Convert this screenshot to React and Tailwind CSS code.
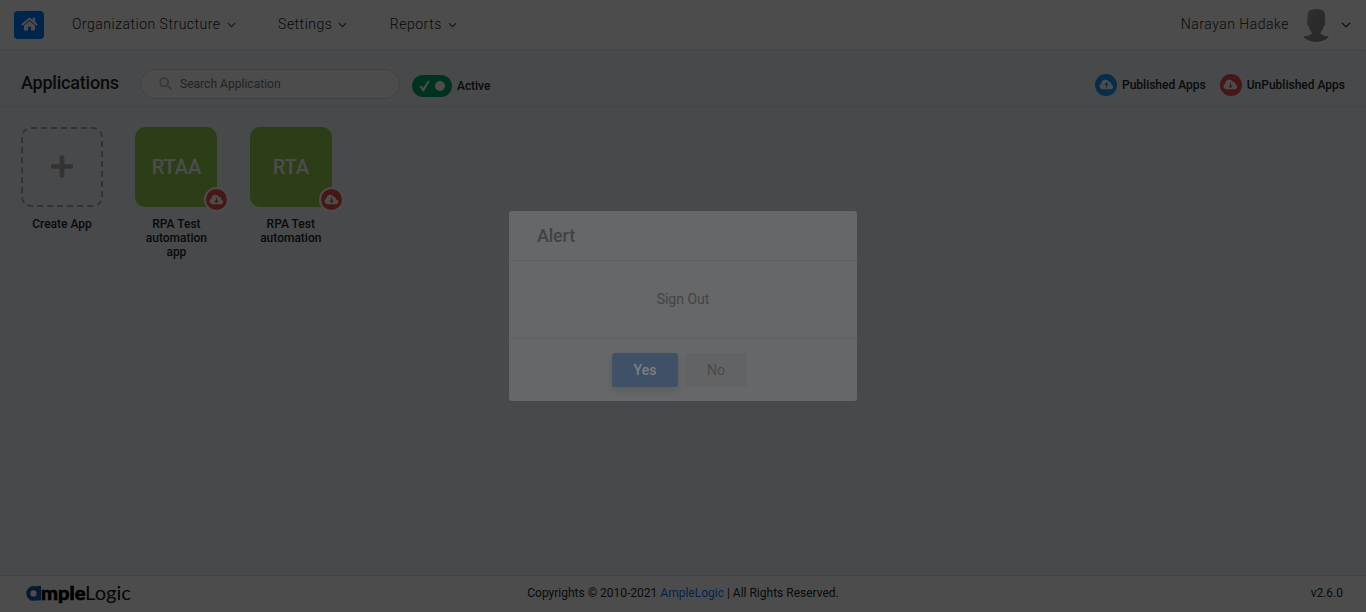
import { FaPlus } from "react-icons/fa";

function Chevron({ className = "" }) {
  return (
    <svg viewBox="0 0 10 6" className={className} fill="none" stroke="currentColor" strokeWidth="1.2">
      <path d="M1 0.8 5 4.8 9 0.8" />
    </svg>
  );
}

function HomeIcon() {
  return (
    <svg viewBox="0 0 17 14" className="-mt-px h-[14px] w-[17px]">
      <path fill="#fff" d="M8.5 4 14 8.6V13.4H10V9.8H7V13.4H3V8.6Z" />
      <path fill="none" stroke="#fff" strokeWidth="2" d="M.8 8 8.5 1.6 16.2 8" />
      <path fill="#fff" d="M11.7 .8H14.1V5.8L11.7 3.8Z" />
    </svg>
  );
}

function SearchIcon() {
  return (
    <svg viewBox="0 0 13 13" className="h-[13px] w-[13px]" fill="none" stroke="#bfc1c4" strokeWidth="2">
      <circle cx="5.2" cy="5.2" r="4" />
      <path d="M8.2 8.2 12.2 12.2" />
    </svg>
  );
}

function CloudArrow({ down = false, className = "" }) {
  return (
    <svg viewBox="0 0 16 11" className={className}>
      <path fill="#fff" d="M3.7 10.5A3.2 3.2 0 0 1 2.6 4.3 4.2 4.2 0 0 1 10.5 2.6 3 3 0 0 1 13.2 5.4 2.6 2.6 0 0 1 12.8 10.5Z" />
      <path
        fill="none"
        stroke={down ? "#e8504c" : "#2196f3"}
        strokeWidth="1.2"
        d={down ? "M8 3.6V8.4M6.2 6.8 8 8.6 9.8 6.8" : "M8 9V4.2M6.2 5.8 8 4 9.8 5.8"}
      />
    </svg>
  );
}

function NavItem({ label, className = "" }) {
  return (
    <div className={`flex items-center gap-[6px] ${className}`}>
      <span className="whitespace-nowrap text-[14px] font-light tracking-[0.5px] text-[#222]">{label}</span>
      <Chevron className="mt-px h-[6px] w-[9px] text-[#444]" />
    </div>
  );
}

function AppTile({ initials, lines }) {
  return (
    <div className="w-[82px]">
      <div className="relative flex h-[80px] items-center justify-center rounded-[10px] bg-[#93cc50] text-[20px] font-medium tracking-[-0.1px] text-white">
        {initials}
        <span className="absolute -right-[12px] -bottom-[5px] flex h-[25px] w-[25px] items-center justify-center rounded-full border-2 border-white bg-[#e8504c]">
          <CloudArrow down className="h-[11px] w-[15px]" />
        </span>
      </div>
      <div className="mt-[10px] text-center text-[12px] leading-[14px] font-medium text-[#212529]">
        {lines.map((l) => (
          <div key={l}>{l}</div>
        ))}
      </div>
    </div>
  );
}

function Logo() {
  return (
    <svg viewBox="0 0 107 24" className="h-[24px] w-[107px]">
      <circle cx="8.6" cy="11.4" r="5.3" fill="none" stroke="#1b57a8" strokeWidth="4.2" />
      <path d="M11.6 4H16V18.4H11.6Z" fill="#1b57a8" />
      <text x="16" y="18" textLength="44.5" lengthAdjust="spacingAndGlyphs" fontFamily="Lato, sans-serif" fontWeight="900" fontSize="19.5" fill="#000" stroke="#000" strokeWidth="0.6">mple</text>
      <text x="60" y="18" textLength="46" lengthAdjust="spacingAndGlyphs" fontFamily="Lato, sans-serif" fontWeight="400" fontSize="19.5" fill="#111">Logic</text>
    </svg>
  );
}

export default function App() {
  return (
    <div className="relative flex h-[612px] w-full flex-col overflow-hidden bg-[#f0f4f9] font-['Roboto',sans-serif]">
      <header className="flex h-[49px] shrink-0 items-center bg-white pr-[15px] pl-[14px] shadow-[0_1px_3px_rgba(0,0,0,0.08)]">
        <div className="flex h-[28px] w-[30px] items-center justify-center rounded-[4px] bg-[#007bff]">
          <HomeIcon />
        </div>
        <NavItem label="Organization Structure" className="ml-[28px]" />
        <NavItem label="Settings" className="ml-[42.5px]" />
        <NavItem label="Reports" className="ml-[42.5px]" />
        <span className="ml-auto text-[14px] font-light tracking-[0.5px] text-[#222]">Narayan Hadake</span>
        <svg viewBox="0 0 28 34" className="ml-[13px] h-[34px] w-[28px]">
          <defs>
            <linearGradient id="avatar" x1="0" y1="0" x2="1" y2="1">
              <stop offset="0" stopColor="#a0a0a0" />
              <stop offset="1" stopColor="#808080" />
            </linearGradient>
          </defs>
          <path fill="url(#avatar)" d="M5.5 8Q5.5 1 11 1.5 14 .3 18 1.5 23 2 23 8L22.8 13Q24 13.5 23.2 16 22.4 18.5 21.6 18.5 21 22 18.6 24V26Q22 28 27 28.6 22 34 14 34T1 28.6Q6 28 9.6 26V24Q7.4 22 6.8 18.5 5.6 18 4.9 15 4.6 13 5.6 13Z" />
        </svg>
        <Chevron className="mt-px ml-[11px] h-[6px] w-[10px] text-[#222]" />
      </header>

      <section className="flex h-[58px] shrink-0 items-center border-b border-[#dfe3e8] pr-[21px] pl-[21px]">
        <h1 className="mt-[9px] w-[119px] text-[18px] font-medium tracking-[-0.22px] text-[#212529]">Applications</h1>
        <div className="mt-[12px] flex h-[30px] w-[260px] items-center rounded-full border border-[#d3d8de] bg-white pl-[18px]">
          <SearchIcon />
          <span className="ml-[8px] text-[12px] tracking-[0.03px] text-[#6c757d]">Search Application</span>
        </div>
        <div className="mt-[16px] ml-[12px] flex h-[22px] w-[40px] items-center rounded-full bg-[#00ac69] pl-[7px]">
          <svg viewBox="0 0 11 12" className="h-[12px] w-[11px]">
            <path fill="#fff" d="M.5 6.6 2.6 5.4 4.3 8 8.7.8H10.8L5 11.3H3.6Z" />
          </svg>
          <span className="ml-[5px] h-[10px] w-[10px] rounded-full bg-white" />
        </div>
        <span className="mt-[16px] ml-[5px] text-[12px] font-medium tracking-[-0.05px] text-[#212529]">Active</span>
        <div className="mt-[14px] ml-auto flex items-center text-[12px] font-medium text-[#212529]">
          <span className="flex h-[22px] w-[22px] items-center justify-center rounded-full bg-[#2196f3]">
            <CloudArrow className="h-[11px] w-[15px]" />
          </span>
          <span className="ml-[5px]">Published Apps</span>
          <span className="ml-[14px] flex h-[22px] w-[22px] items-center justify-center rounded-full bg-[#e8504c]">
            <CloudArrow down className="h-[11px] w-[15px]" />
          </span>
          <span className="ml-[5px]">UnPublished Apps</span>
        </div>
      </section>

      <main className="flex grow items-start gap-[32.4px] pt-[20px] pl-[21px]">
        <div className="w-[82px]">
          <div className="flex h-[80px] items-center justify-center rounded-[10px] border-2 border-dashed border-[#aaa]">
            <FaPlus className="-mt-px h-[25px] w-[22px] text-[#aaa]" />
          </div>
          <div className="mt-[10px] text-center text-[12px] leading-[14px] font-medium text-[#212529]">Create App</div>
        </div>
        <AppTile initials="RTAA" lines={["RPA Test", "automation", "app"]} />
        <AppTile initials="RTA" lines={["RPA Test", "automation"]} />
      </main>

      <footer className="grid h-[37px] shrink-0 grid-cols-3 items-center border-t border-[#d9dde2] bg-white pr-[23px] pl-[25px] text-[12px] text-[#212529]">
        <Logo />
        <div className="-mt-[2px] -ml-[2px] text-center">
          Copyrights © 2010-2021 <span className="text-[#007bff]">AmpleLogic</span> | All Rights Reserved.
        </div>
        <div className="-mt-[2px] text-right">v2.6.0</div>
      </footer>

      <div className="absolute inset-0 flex items-center justify-center bg-black/70">
        <div className="flex h-[190px] w-[348px] flex-col rounded-[3px] bg-[#666769]">
          <div className="flex h-[50px] items-center border-b border-[#5f6062] pl-[28px] text-[18px] font-medium tracking-[-0.2px] text-[#414244]">Alert</div>
          <div className="flex h-[78px] items-center justify-center border-b border-[#5f6062] text-[14px] text-[#434446]">Sign Out</div>
          <div className="flex grow items-center gap-[7px] pl-[103px] text-[14px]">
            <div className="flex h-[34px] w-[66px] items-center justify-center rounded-[3px] bg-[#3e5167] font-medium text-[#7d8083] shadow-[0_4px_6px_rgba(0,0,0,0.1)]">Yes</div>
            <div className="flex h-[34px] w-[62px] items-center justify-center rounded-[3px] bg-[#626365] text-[#48494b]">No</div>
          </div>
        </div>
      </div>
    </div>
  );
}
